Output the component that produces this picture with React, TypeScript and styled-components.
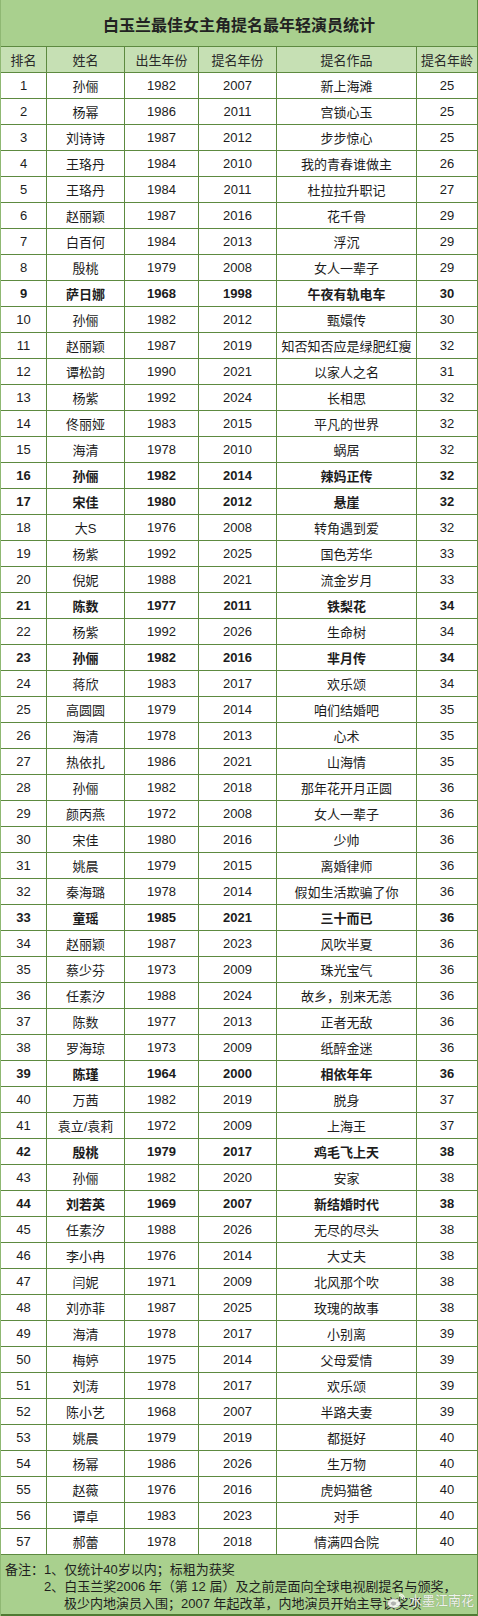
import React from 'react';
import styled, { createGlobalStyle } from 'styled-components';

const GlobalStyle = createGlobalStyle`
  html, body {
    margin: 0;
    padding: 0;
    background: #ffffff;
  }
  body {
    font-family: 'Liberation Sans', 'Noto Sans CJK SC', sans-serif;
    color: #1c1c1c;
  }
`;

type Row = [string, string, string, string, string, boolean?];

const rows: Row[] = [
  ['孙俪', '1982', '2007', '新上海滩', '25'],
  ['杨幂', '1986', '2011', '宫锁心玉', '25'],
  ['刘诗诗', '1987', '2012', '步步惊心', '25'],
  ['王珞丹', '1984', '2010', '我的青春谁做主', '26'],
  ['王珞丹', '1984', '2011', '杜拉拉升职记', '27'],
  ['赵丽颖', '1987', '2016', '花千骨', '29'],
  ['白百何', '1984', '2013', '浮沉', '29'],
  ['殷桃', '1979', '2008', '女人一辈子', '29'],
  ['萨日娜', '1968', '1998', '午夜有轨电车', '30', true],
  ['孙俪', '1982', '2012', '甄嬛传', '30'],
  ['赵丽颖', '1987', '2019', '知否知否应是绿肥红瘦', '32'],
  ['谭松韵', '1990', '2021', '以家人之名', '31'],
  ['杨紫', '1992', '2024', '长相思', '32'],
  ['佟丽娅', '1983', '2015', '平凡的世界', '32'],
  ['海清', '1978', '2010', '蜗居', '32'],
  ['孙俪', '1982', '2014', '辣妈正传', '32', true],
  ['宋佳', '1980', '2012', '悬崖', '32', true],
  ['大S', '1976', '2008', '转角遇到爱', '32'],
  ['杨紫', '1992', '2025', '国色芳华', '33'],
  ['倪妮', '1988', '2021', '流金岁月', '33'],
  ['陈数', '1977', '2011', '铁梨花', '34', true],
  ['杨紫', '1992', '2026', '生命树', '34'],
  ['孙俪', '1982', '2016', '芈月传', '34', true],
  ['蒋欣', '1983', '2017', '欢乐颂', '34'],
  ['高圆圆', '1979', '2014', '咱们结婚吧', '35'],
  ['海清', '1978', '2013', '心术', '35'],
  ['热依扎', '1986', '2021', '山海情', '35'],
  ['孙俪', '1982', '2018', '那年花开月正圆', '36'],
  ['颜丙燕', '1972', '2008', '女人一辈子', '36'],
  ['宋佳', '1980', '2016', '少帅', '36'],
  ['姚晨', '1979', '2015', '离婚律师', '36'],
  ['秦海璐', '1978', '2014', '假如生活欺骗了你', '36'],
  ['童瑶', '1985', '2021', '三十而已', '36', true],
  ['赵丽颖', '1987', '2023', '风吹半夏', '36'],
  ['蔡少芬', '1973', '2009', '珠光宝气', '36'],
  ['任素汐', '1988', '2024', '故乡，别来无恙', '36'],
  ['陈数', '1977', '2013', '正者无敌', '36'],
  ['罗海琼', '1973', '2009', '纸醉金迷', '36'],
  ['陈瑾', '1964', '2000', '相依年年', '36', true],
  ['万茜', '1982', '2019', '脱身', '37'],
  ['袁立/袁莉', '1972', '2009', '上海王', '37'],
  ['殷桃', '1979', '2017', '鸡毛飞上天', '38', true],
  ['孙俪', '1982', '2020', '安家', '38'],
  ['刘若英', '1969', '2007', '新结婚时代', '38', true],
  ['任素汐', '1988', '2026', '无尽的尽头', '38'],
  ['李小冉', '1976', '2014', '大丈夫', '38'],
  ['闫妮', '1971', '2009', '北风那个吹', '38'],
  ['刘亦菲', '1987', '2025', '玫瑰的故事', '38'],
  ['海清', '1978', '2017', '小别离', '39'],
  ['梅婷', '1975', '2014', '父母爱情', '39'],
  ['刘涛', '1978', '2017', '欢乐颂', '39'],
  ['陈小艺', '1968', '2007', '半路夫妻', '39'],
  ['姚晨', '1979', '2019', '都挺好', '40'],
  ['杨幂', '1986', '2026', '生万物', '40'],
  ['赵薇', '1976', '2016', '虎妈猫爸', '40'],
  ['谭卓', '1983', '2023', '对手', '40'],
  ['郝蕾', '1978', '2018', '情满四合院', '40'],
];

const headers = ['排名', '姓名', '出生年份', '提名年份', '提名作品', '提名年龄'];

const LINE = '#5d8a40';

const Sheet = styled.div`
  width: 478px;
  box-sizing: border-box;
  border-left: 1px solid #8fb873;
  border-right: 1px solid ${LINE};
  background: #ffffff;
`;

const Title = styled.div`
  height: 47px;
  box-sizing: border-box;
  border-bottom: 1px solid ${LINE};
  background: #a9d08e;
  display: flex;
  align-items: center;
  justify-content: center;
  font-size: 16px;
  font-weight: bold;
  color: #222;
  padding-top: 2px;
`;

const GridRow = styled.div<{ $head?: boolean; $bold?: boolean }>`
  display: grid;
  grid-template-columns: 46px 78px 74px 78px 140px 1fr;
  height: 26px;
  background: ${(p) => (p.$head ? '#c6e0b4' : '#ffffff')};
  font-weight: ${(p) => (p.$bold ? 'bold' : 'normal')};
  font-size: 13px;
  color: ${(p) => (p.$head ? '#2a2a2a' : '#1c1c1c')};
`;

const Cell = styled.div`
  box-sizing: border-box;
  display: flex;
  align-items: center;
  justify-content: center;
  border-bottom: 1px solid ${LINE};
  white-space: nowrap;
  overflow: hidden;
  &:not(:last-child) {
    border-right: 1px solid ${LINE};
  }
`;

const Notes = styled.div`
  position: relative;
  height: 61px;
  box-sizing: border-box;
  background: #a9d08e;
  border-bottom: 2px solid #4f7a33;
  padding: 6px 0 0 4px;
  font-size: 13px;
  line-height: 17px;
  color: #1e1e1e;
`;

const NoteLine = styled.div<{ $indent: number }>`
  padding-left: ${(p) => p.$indent}px;
  white-space: nowrap;
`;

const Mark = styled.div`
  position: absolute;
  right: 3px;
  bottom: 5px;
  display: flex;
  align-items: center;
  gap: 3px;
  color: rgba(255, 255, 255, 0.88);
  font-size: 13px;
  text-shadow: 0 0 1px rgba(80, 80, 80, 0.5);
`;

const WeiboLogo = () => (
  <svg width="20" height="16" viewBox="0 0 20 16">
    <path
      d="M8 5.5c-3.6 0-6.5 2.2-6.5 4.8S4.4 15 8 15s6.5-2.1 6.5-4.7c0-1.4-1-2-2.2-2.4.6-1.5.1-2.4-1.6-1.9-.8.2-1.7.6-2.7-.5z"
      fill="rgba(255,255,255,0.85)"
      stroke="rgba(90,90,90,0.45)"
      strokeWidth="0.8"
    />
    <ellipse cx="7.6" cy="10.6" rx="2.6" ry="2" fill="rgba(120,120,120,0.5)" />
    <path d="M13 2.5c2 0 3.6 1.4 3.6 3.4M13 0.8c3 0 5.4 2.2 5.4 5.1" fill="none" stroke="rgba(255,255,255,0.85)" strokeWidth="1.2" />
  </svg>
);

export default function App() {
  return (
    <>
      <GlobalStyle />
      <Sheet>
        <Title>白玉兰最佳女主角提名最年轻演员统计</Title>
        <GridRow $head>
          {headers.map((h) => (
            <Cell key={h}>{h}</Cell>
          ))}
        </GridRow>
        {rows.map(([name, born, year, work, age, bold], i) => (
          <GridRow key={i} $bold={bold}>
            <Cell>{i + 1}</Cell>
            <Cell>{name}</Cell>
            <Cell>{born}</Cell>
            <Cell>{year}</Cell>
            <Cell>{work}</Cell>
            <Cell>{age}</Cell>
          </GridRow>
        ))}
        <Notes>
          <NoteLine $indent={0}>备注：1、仅统计40岁以内；标粗为获奖</NoteLine>
          <NoteLine $indent={39}>2、白玉兰奖2006 年（第 12 届）及之前是面向全球电视剧提名与颁奖，</NoteLine>
          <NoteLine $indent={59}>极少内地演员入围；2007 年起改革，内地演员开始主导该奖项</NoteLine>
          <Mark>
            <WeiboLogo />
            <span>水墨江南花</span>
          </Mark>
        </Notes>
      </Sheet>
    </>
  );
}
